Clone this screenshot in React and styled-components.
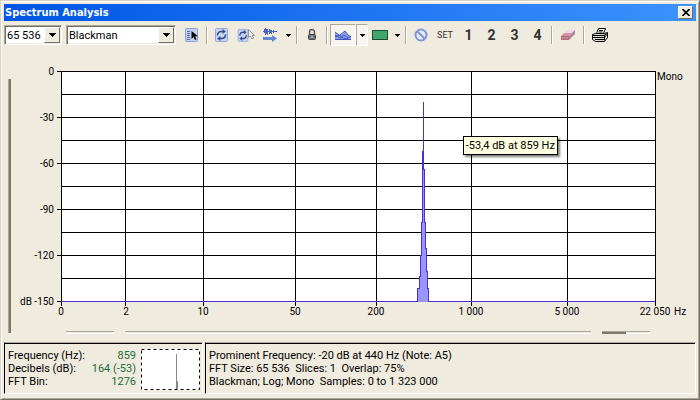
import React from 'react';
import styled, { createGlobalStyle } from 'styled-components';

const GlobalStyle = createGlobalStyle`
  * {
    box-sizing: border-box;
  }

  body {
    margin: 0;
    background: #efebde;
    color: #000;
    font-family: Roboto, 'Liberation Sans', sans-serif;
    font-size: 11px;
    line-height: 13px;
  }
`;

const Window = styled.div`
  display: flex;
  flex-direction: column;
  min-height: 100vh;
  padding: 3px;
  background: #efebde;
  border: 1px solid #d6d3c6;
  border-right-color: #716f64;
  border-bottom-color: #716f64;
  box-shadow: inset 1px 1px #fff, inset -1px -1px #aca899;
`;

const TitleBar = styled.header`
  display: flex;
  align-items: center;
  justify-content: space-between;
  height: 17px;
  padding: 0 3px 0 1px;
  background: linear-gradient(90deg, #0055e5, #3b93ff);
`;

const Title = styled.h1`
  margin: 0;
  color: #fff;
  font-family: 'DejaVu Sans Condensed', 'Liberation Sans', sans-serif;
  font-size: 11px;
  font-weight: 700;
`;

const CloseButton = styled.button`
  display: flex;
  align-items: center;
  justify-content: center;
  width: 15px;
  height: 13px;
  padding: 0;
  background: #efebde;
  border: 1px solid;
  border-color: #fff #716f64 #716f64 #fff;
`;

const Toolbar = styled.div`
  display: flex;
  align-items: center;
  height: 28px;
`;

const Combo = styled.div`
  display: grid;
  width: ${(props) => props.$width};
  height: 20px;
  margin-right: 4px;
  background: #fff;
  border: 1px solid;
  border-color: #aca899 #fff #fff #aca899;
  box-shadow: inset 1px 1px #716f64, inset -1px -1px #efebde;

  > * {
    grid-area: 1 / 1;
  }
`;

const Select = styled.select`
  width: 100%;
  height: 18px;
  padding: 0 18px 0 2px;
  appearance: none;
  background: none;
  border: none;
  color: inherit;
  font: inherit;
`;

const ComboArrow = styled.span`
  display: flex;
  align-items: center;
  justify-content: center;
  justify-self: end;
  width: 16px;
  height: 16px;
  margin: 1px;
  background: #efebde;
  border: 1px solid;
  border-color: #fff #716f64 #716f64 #fff;
  pointer-events: none;
`;

const ToolButton = styled.button`
  display: flex;
  align-items: center;
  justify-content: center;
  flex: none;
  width: ${(props) => props.$width || '24px'};
  height: 22px;
  padding: 0;
  background: ${(props) => (props.$pressed ? '#f7f5ee' : 'none')};
  border: 1px solid;
  border-color: ${(props) =>
    props.$pressed ? '#aca899 #fff #fff #aca899' : 'transparent'};
  color: #333;
  font-family: Roboto, 'Liberation Sans', sans-serif;
  font-size: ${(props) => (props.$small ? '9px' : '14px')};
  font-weight: ${(props) => (props.$small ? 400 : 700)};
`;

const Separator = styled.span`
  flex: none;
  width: 2px;
  height: 18px;
  margin: 0 2px;
  border-left: 1px solid #aca899;
  border-right: 1px solid #fff;
`;

const Workspace = styled.main`
  display: flex;
  flex: 1;
  padding: 22px 8px 8px 4px;
`;

const VerticalTrack = styled.div`
  flex: none;
  width: 3px;
  margin: 8px 0 1px;
  background: #7b7869;
  border-left: 1px solid #aca899;
`;

const ChartColumn = styled.div`
  display: flex;
  flex: 1;
  flex-direction: column;
  justify-content: space-between;
`;

const Chart = styled.div`
  padding: 0 33px 0 50px;
`;

const Plot = styled.svg`
  display: block;
  width: 100%;
  height: 238px;
  overflow: visible;
  font-size: 10px;
`;

const Sliders = styled.div`
  display: grid;
  grid-template-columns: 48px 1fr 48px;
  gap: 11px;
  padding: 0 38px 0 55px;
`;

const Track = styled.div`
  height: 3px;
  border-top: 1px solid #aca899;
  border-bottom: 1px solid #fff;
`;

const Thumb = styled.div`
  width: 24px;
  height: 2px;
  background: #7b7869;
`;

const StatusBar = styled.footer`
  display: flex;
  gap: 2px;
  padding-bottom: 2px;
`;

const Panel = styled.section`
  display: flex;
  flex: ${(props) => (props.$grow ? 1 : 'none')};
  justify-content: space-between;
  width: ${(props) => props.$width || 'auto'};
  height: 52px;
  padding: 6px 2px 0 3px;
  border: 1px solid;
  border-color: #aca899 #fff #fff #000;
  box-shadow: inset 0 1px #000;
`;

const Readings = styled.dl`
  display: grid;
  grid-template-columns: auto auto;
  align-content: start;
  flex: 1;
  justify-content: space-between;
  margin: 0 5px 0 0;
`;

const Value = styled.dd`
  margin: 0;
  color: #1c6b3c;
  text-align: right;
`;

const Line = styled.p`
  margin: 0;
  white-space: pre;
`;

const Tooltip = styled.div`
  position: absolute;
  top: 136px;
  left: 66.1%;
  padding: 2px;
  background: #ffffe1;
  border: 1px solid #000;
  box-shadow: 2px 2px 2px rgba(0, 0, 0, 0.5);
  white-space: nowrap;
`;

const Thumbnail = styled.svg`
  flex: none;
  width: 59px;
  height: 41px;
  background: #fff;
`;

const TICKS = [
  [0, '0'],
  [65, '2'],
  [142, '10'],
  [234, '50'],
  [315, '200'],
  [410, '1 000'],
  [506, '5 000'],
  [594, '22 050'],
];

const percent = (x) => `${(x / 594) * 100}%`;

function Arrow() {
  return (
    <svg width="7" height="4" viewBox="0 0 7 4" shapeRendering="crispEdges">
      <path d="M0 0h7v1H0zM1 1h5v1H1zM2 2h3v1H2zM3 3h1v1H3z" />
    </svg>
  );
}

function SmallArrow() {
  return (
    <svg width="5" height="3" viewBox="0 0 5 3" shapeRendering="crispEdges">
      <path d="M0 0h5v1H0zM1 1h3v1H1zM2 2h1v1H2z" />
    </svg>
  );
}

function Icon({ width = 16, children }) {
  return (
    <svg width={width} height="16" viewBox={`0 0 ${width} 16`} fill="none">
      {children}
    </svg>
  );
}

function RefreshShape() {
  return (
    <>
      <rect x="1.5" y="1.5" width="12" height="13" rx="1" fill="#c9d6f2" stroke="#93a6d6" />
      <path d="M3.5 8.500q0-4 4-4H9" stroke="#3a4f92" strokeWidth="1.600" />
      <path d="M8.500 2l3.500 2.500L8.500 7z" fill="#3a4f92" />
      <path d="M11.500 7.500q0 4-4 4H6" stroke="#3a4f92" strokeWidth="1.600" />
      <path d="M6.500 9L3 11.500 6.500 14z" fill="#3a4f92" />
    </>
  );
}

function PresetIcon() {
  return (
    <Icon>
      <rect x="1.5" y="1.5" width="12" height="13" rx="1" fill="#c3d0f0" stroke="#8ba0d4" />
      <path d="M3 4.500h3M3 6.500h3M3 8.500h3M3 10.500h3M3 12.500h3" stroke="#506cb4" />
      <path d="M7.500 4v8l2-2 1.500 3 1.500-.8-1.400-2.900h2.900z" fill="#000" />
    </Icon>
  );
}

function RefreshIcon() {
  return (
    <Icon>
      <RefreshShape />
    </Icon>
  );
}

function RefreshCursorIcon() {
  return (
    <Icon width={18}>
      <g transform="translate(0 1) scale(.8 .92)">
        <RefreshShape />
      </g>
      <path d="M11.500 2.500v8l2-1.500 1.500 3 1.500-.8-1.300-2.700h2.300z" fill="#eee" stroke="#999" />
    </Icon>
  );
}

function WaveIcon() {
  return (
    <Icon>
      <path
        d="M1 4.500h14M2.500 2v4M3.500 1v7M4.500 2v5M5.500 2v6M7.500 2v5M8.500 3v3M9.500 3v4M11.500 3v3"
        stroke="#4a62c0"
      />
      <path d="M1 10h9V8l5 3.500-5 3.500v-2H1z" fill="#6288ce" />
    </Icon>
  );
}

function LockIcon() {
  return (
    <Icon>
      <path d="M5.500 7V5a2.500 2.500 0 015 0v2" stroke="#555" strokeWidth="1.500" />
      <rect x="4.5" y="7.5" width="7" height="5" rx="1" fill="#6c7380" stroke="#444" />
      <path d="M8 9v2" stroke="#ddd" />
    </Icon>
  );
}

function SpectrumIcon() {
  return (
    <Icon width={18}>
      <path d="M1 13V5l4 3 3-1 3-3 3 4 3 2v3z" fill="#8ea2ec" />
      <path
        d="M1 5l4 3 4 3 4 1 4-3M1 10l5-2 5-4 3 4 3 2M1 8l5 3 4-3 4 3M1 12.500h16"
        stroke="#3f56c0"
      />
    </Icon>
  );
}

function NoneIcon() {
  return (
    <Icon>
      <circle cx="8" cy="8" r="5.5" fill="#e7ecf8" stroke="#8095d5" strokeWidth="2" />
      <path d="M4 4l8 8" stroke="#8095d5" strokeWidth="2" />
    </Icon>
  );
}

function EraserIcon() {
  return (
    <Icon>
      <path d="M1 9l6-6h8L9 9z" fill="#eed9e0" />
      <path d="M1 9l3-3h8L9 9z" fill="#d893a2" />
      <path d="M1 9h8v4H1z" fill="#c97f90" />
      <path d="M9 9l6-6v4l-6 6z" fill="#a98a9c" />
      <path d="M1.500 9.500h7v3h-7z" stroke="#b56a7c" />
    </Icon>
  );
}

function PrinterIcon() {
  return (
    <Icon>
      <path d="M4.500 6.500l2-5h7l-2 5z" fill="#fff" stroke="#000" />
      <path d="M7 3.500h4M6.500 5h4" stroke="#000" />
      <path d="M.5 7.500l3-1h9l3-1v5l-3 4h-9l-3-2z" fill="#dedcd0" stroke="#000" />
      <path d="M1 8.500h11l3-2M1 10.500h11l3-3M3 12.500h9M12.500 8.500v5" stroke="#000" />
    </Icon>
  );
}

function SpectrumPlot() {
  return (
    <Plot role="img" aria-label="Frequency spectrum">
      <rect width="100%" height="230" fill="#fff" />
      <g stroke="#000" shapeRendering="crispEdges">
        {[...Array(11).keys()].map((i) => (
          <line
            key={i}
            x1={i % 2 ? 0 : -4}
            x2={i === 10 ? 0 : '100%'}
            y1={i * 23 + 0.5}
            y2={i * 23 + 0.5}
          />
        ))}
        {TICKS.map(([x]) => (
          <line key={x} x1={percent(x)} x2={percent(x)} y1="0" y2="235" />
        ))}
      </g>
      {[0, -30, -60, -90, -120, -150].map((db, i) => (
        <text key={db} x="-7" y={i * 46 + 4} textAnchor="end">
          {db === -150 ? 'dB -150' : db}
        </text>
      ))}
      {TICKS.map(([x, label]) => (
        <text key={label} x={percent(x)} y="244" textAnchor="middle">
          {label}
        </text>
      ))}
      <text x="100%" y="9" dx="2">Mono</text>
      <text x="100%" y="244" dx="19">Hz</text>
      <svg
        width="100%"
        height="231"
        viewBox="0 0 594 231"
        preserveAspectRatio="none"
        shapeRendering="crispEdges"
      >
        <path
          d="M0 230.500H356.500V217H358.500V205H359.500V184H360.500V151H361.500V80H362.500V98H363.500V151H364.500V177H365.500V200H366.500V217H367.500V230.500H594"
          fill="#9795ff"
          stroke="#4a30d0"
        />
        <path d="M362.500 31v60" stroke="#4a30d0" />
      </svg>
    </Plot>
  );
}

function App() {
  return (
    <Window>
      <GlobalStyle />
      <TitleBar>
        <Title>Spectrum Analysis</Title>
        <CloseButton aria-label="Close">
          <svg width="8" height="7" viewBox="0 0 8 7">
            <path d="M.5 0l7 7M7.500 0l-7 7" stroke="#000" strokeWidth="1.600" />
          </svg>
        </CloseButton>
      </TitleBar>
      <Toolbar>
        <Combo $width="58px">
          <Select aria-label="FFT size" defaultValue="65 536">
            <option>65 536</option>
          </Select>
          <ComboArrow>
            <Arrow />
          </ComboArrow>
        </Combo>
        <Combo $width="110px">
          <Select aria-label="Smoothing window" defaultValue="Blackman">
            <option>Blackman</option>
          </Select>
          <ComboArrow>
            <Arrow />
          </ComboArrow>
        </Combo>
        <ToolButton aria-label="Presets">
          <PresetIcon />
        </ToolButton>
        <Separator />
        <ToolButton aria-label="Refresh">
          <RefreshIcon />
        </ToolButton>
        <ToolButton aria-label="Refresh at cursor">
          <RefreshCursorIcon />
        </ToolButton>
        <ToolButton aria-label="Real time">
          <WaveIcon />
        </ToolButton>
        <ToolButton $width="12px" aria-label="Real time options">
          <SmallArrow />
        </ToolButton>
        <Separator />
        <ToolButton aria-label="Lock">
          <LockIcon />
        </ToolButton>
        <Separator />
        <ToolButton $pressed $width="26px" aria-label="Display style">
          <SpectrumIcon />
        </ToolButton>
        <ToolButton $pressed $width="12px" aria-label="Display style options">
          <SmallArrow />
        </ToolButton>
        <ToolButton $width="23px" aria-label="Colour">
          <svg width="16" height="10" viewBox="0 0 16 10">
            <rect x=".5" y=".5" width="15" height="9" fill="#3fa56d" stroke="#1b4d31" />
          </svg>
        </ToolButton>
        <ToolButton $width="12px" aria-label="Colour options">
          <SmallArrow />
        </ToolButton>
        <Separator />
        <ToolButton aria-label="No snapshot">
          <NoneIcon />
        </ToolButton>
        <ToolButton $small>SET</ToolButton>
        <ToolButton $width="23px">1</ToolButton>
        <ToolButton $width="23px">2</ToolButton>
        <ToolButton $width="23px">3</ToolButton>
        <ToolButton $width="23px">4</ToolButton>
        <Separator />
        <ToolButton $width="26px" aria-label="Clear">
          <EraserIcon />
        </ToolButton>
        <Separator />
        <ToolButton $width="26px" aria-label="Print">
          <PrinterIcon />
        </ToolButton>
      </Toolbar>
      <Workspace>
        <VerticalTrack />
        <ChartColumn>
          <Chart>
            <SpectrumPlot />
          </Chart>
          <Sliders>
            <Track />
            <Track />
            <Track>
              <Thumb />
            </Track>
          </Sliders>
        </ChartColumn>
      </Workspace>
      <StatusBar>
        <Panel $width="199px">
          <Readings>
            <dt>Frequency (Hz):</dt>
            <Value>859</Value>
            <dt>Decibels (dB):</dt>
            <Value>164 (-53)</Value>
            <dt>FFT Bin:</dt>
            <Value>1276</Value>
          </Readings>
          <Thumbnail viewBox="0 0 59 41">
            <rect x=".5" y=".5" width="58" height="40" fill="none" stroke="#000" strokeDasharray="3 3" />
            <path d="M35.500 5v35M36.500 32v8" stroke="#888" />
          </Thumbnail>
        </Panel>
        <Panel $grow>
          <div>
            <Line>Prominent Frequency: -20 dB at 440 Hz (Note: A5)</Line>
            <Line>{'FFT Size: 65 536  Slices: 1  Overlap: 75%'}</Line>
            <Line>{'Blackman; Log; Mono  Samples: 0 to 1 323 000'}</Line>
          </div>
        </Panel>
      </StatusBar>
      <Tooltip role="tooltip">-53,4 dB at 859 Hz</Tooltip>
    </Window>
  );
}

export default App;
